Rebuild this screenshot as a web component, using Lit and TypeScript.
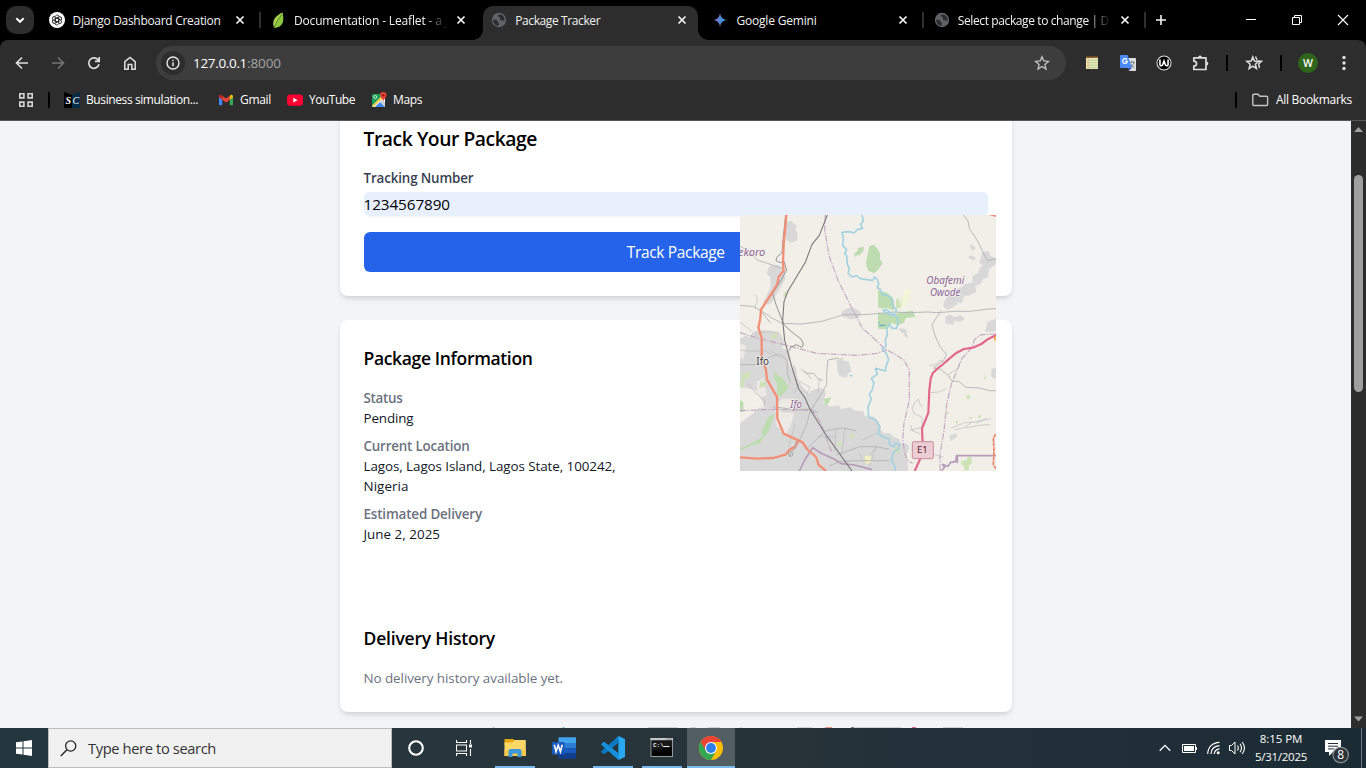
import { LitElement, html, css, svg } from "lit";
import { customElement, property } from "lit/decorators.js";
import { classMap } from "lit/directives/class-map.js";

/** One line of text whose tracking is tuned so the line spans `width` pixels. */
@customElement("fit-text")
class FitText extends LitElement {
  static styles = css`
    :host { display: inline-block; white-space: pre; }
  `;
  @property({ type: Number }) width = 0;
  @property() text = "";
  render() {
    return html`<span>${this.text}</span>`;
  }
  updated() {
    const span = this.renderRoot.querySelector("span") as HTMLElement;
    span.style.letterSpacing = "0px";
    const natural = span.getBoundingClientRect().width;
    if (this.width && natural) {
      span.style.letterSpacing = `${(this.width - natural) / this.text.length}px`;
    }
  }
}

const fit = (text: string, width: number) => html`<fit-text text=${text} width=${width}></fit-text>`;

const globe = html`<svg width="16" height="16" viewBox="0 0 16 16">
  <circle cx="8" cy="8" r="7.2" fill="#5f6368" />
  <path d="M2.2 7.2C3.6 8 5.2 7.4 6 8.2c.9.8.2 1.7 1 2.3.8.5 1.1.6 1 1.6-.1.9-.2 1.2-.9 1.6C4 13.3 1.9 10.600 2.200 7.200zM8.600 2.400c-1.400.2-2.200 1-2 1.900.3.8 1.700.3 2.300 1.100.6.9-.5 1.500.2 2.300.8.9 2.100.1 3 .8.5.4.6.9 1.100 1C14.500 6.200 12.300 2.700 8.600 2.400z" fill="#2b2c2e" />
</svg>`;

const gptIcon = html`<svg width="16" height="16" viewBox="0 0 16 16">
  <circle cx="8" cy="8" r="8" fill="#fff" />
  <g fill="none" stroke="#222" stroke-width=".9">
    ${[0, 60, 120, 180, 240, 300].map(
      (a) => svg`<path transform="rotate(${a} 8 8)" d="M6.200 8.900V5.100C6.200 2.900 9.200 2.300 10.200 4.200M6.200 7 9.300 5.200" />`
    )}
  </g>
</svg>`;

const leafIcon = html`<svg width="16" height="16" viewBox="0 0 16 16">
  <path d="M12.300.5C7 3 2.300 7 3.300 13.200L4 15.500c5 .3 8.500-2.500 9.100-7.300.3-3-.2-5.500-.8-7.700z" fill="#a5d14f" />
  <path d="M12.300.5C9.500 5 6.500 10 4 15.500c5 .3 8.500-2.500 9.100-7.300.3-3-.2-5.500-.8-7.700z" fill="#8dc63f" />
  <path d="M11.800 2.500C8.500 7 6 10.500 4 15.500" stroke="#466b1c" stroke-width=".7" fill="none" />
</svg>`;

const geminiIcon = html`<svg width="16" height="16" viewBox="0 0 16 16">
  <defs><linearGradient id="gm" x1="0" y1="0" x2="1" y2="0">
    <stop offset="0" stop-color="#9a72c8" /><stop offset=".45" stop-color="#5684d8" /><stop offset="1" stop-color="#2fb0ee" />
  </linearGradient></defs>
  <path d="M8 1.300C8.500 5.200 10.600 7.500 14.500 8 10.600 8.500 8.500 10.700 8 14.700 7.500 10.700 5.400 8.500 1.500 8 5.400 7.500 7.500 5.200 8 1.300z" fill="url(#gm)" />
</svg>`;

const tabs = [
  { title: "Django Dashboard Creation", width: 148, icon: gptIcon, sep: true },
  { title: "Documentation - Leaflet - a J", width: 154, icon: leafIcon, fade: true },
  { title: "Package Tracker", width: 85, icon: globe, active: true },
  { title: "Google Gemini", width: 80, icon: geminiIcon, sep: true },
  { title: "Select package to change | D", width: 151, icon: globe, fade: true, sep: true },
];

const closeX = html`<svg width="16" height="16" viewBox="0 0 16 16"><path d="M4.500 4.500l7 7M11.500 4.500l-7 7" stroke="#f4f4f4" stroke-width="1.700" /></svg>`;

@customElement("tab-strip")
class TabStrip extends LitElement {
  static styles = css`
    :host { display: flex; height: 40px; background: #000; color: #f2f2f2; font-size: 12px; align-items: center; }
    svg { display: block; flex: none; }
    .search { width: 28px; height: 28px; margin: 0 6px; border-radius: 10px; background: #2d2d2d; display: grid; place-items: center; }
    .tabs { display: flex; align-self: stretch; padding-top: 6px; margin-left: .6px; }
    .tab { width: 221.300px; display: flex; height: 34px; }
    .body { width: 215px; box-sizing: border-box; display: flex; align-items: center; padding: 0 8px 6px 8px; border-radius: 10px 10px 0 0; position: relative; }
    .active .body { background: #2d2d2d; }
    .active .body::before, .active .body::after { content: ""; position: absolute; bottom: 0; width: 10px; height: 10px; }
    .active .body::before { left: -10px; background: radial-gradient(circle at 0 0, transparent 9.500px, #2d2d2d 10px); }
    .active .body::after { right: -10px; background: radial-gradient(circle at 100% 0, transparent 9.500px, #2d2d2d 10px); }
    .title { width: 154px; margin-left: 8px; overflow: hidden; line-height: 18px; padding-top: 2px; white-space: nowrap; }
    .fade { mask-image: linear-gradient(90deg, #000 130px, transparent 153px); }
    .close { margin-left: 6px; }
    .sep { width: 2px; height: 16px; background: #2f2f2f; margin: 6px 0 0 3px; }
    .plus { margin-left: 8px; }
    .win { margin-left: auto; display: flex; padding-right: 0; }
    .win svg { width: 46px; height: 40px; }
  `;
  render() {
    return html`
      <div class="search"><svg width="12" height="12" viewBox="0 0 12 12"><path d="M2.300 4.200 6 7.800 9.700 4.200" fill="none" stroke="#fff" stroke-width="1.900" /></svg></div>
      <div class="tabs">
        ${tabs.map(
          (t) => html`<div class=${classMap({ tab: true, active: !!t.active })}>
            <div class="body">${t.icon}<div class=${classMap({ title: true, fade: !!t.fade })}>${fit(t.title, t.width)}</div><span class="close">${closeX}</span></div>
            ${t.sep ? html`<div class="sep"></div>` : ""}
          </div>`
        )}
      </div>
      <svg class="plus" width="12" height="12" viewBox="0 0 12 12"><path d="M6 1v10M1 6h10" stroke="#f4f4f4" stroke-width="1.600" /></svg>
      <div class="win">
        <svg viewBox="0 0 46 40"><path d="M18 19.500h10" stroke="#fff" /></svg>
        <svg viewBox="0 0 46 40"><path d="M18.500 17.500h7v7h-7zM20.500 17.500v-2h7v7h-2" stroke="#fff" fill="none" /></svg>
        <svg viewBox="0 0 46 40"><path d="M18 15l10 10M28 15 18 25" stroke="#fff" stroke-width="1.100" /></svg>
      </div>`;
  }
}

@customElement("browser-bar")
class BrowserBar extends LitElement {
  static styles = css`
    :host { display: block; background: #000; color: #fff; }
    .wrap { background: #2d2d2d; border-radius: 8px 8px 0 0; border-bottom: 1px solid #55565a; height: 80px; }
    svg { display: block; flex: none; }
    .row { display: flex; align-items: center; height: 46px; padding: 0 4px; }
    .ic { width: 36px; height: 34px; display: grid; place-items: center; flex: none; }
    .omni { flex: 1; margin: 0 8px; height: 34px; border-radius: 17px; background: #3d3d3d; display: flex; align-items: center; font-size: 13.500px; }
    .info { width: 24px; height: 24px; border-radius: 50%; background: #2d2d2d; display: grid; place-items: center; margin: 0 8px 0 5px; }
    .dim { color: #a3a3a3; }
    .star { margin-left: auto; margin-right: 16px; }
    .sep { width: 2px; height: 16px; background: #000; margin: 0 8px; flex: none; }
    .avatar { width: 20px; height: 20px; border-radius: 50%; background: #2f661b; font-size: 10.500px; font-weight: 600; display: grid; place-items: center; line-height: 20px; }
    .marks { display: flex; align-items: center; height: 28px; font-size: 12px; padding: 0 14px 0 18px; line-height: 18px; }
    .marks .sep { margin: 0 14px; }
    .mark { display: flex; gap: 6px; align-items: center; margin-right: 16px; }
    .first { margin-right: 20px; }
    .right { margin-left: auto; display: flex; align-items: center; }
    .right fit-text { margin-left: 7px; }
  `;
  render() {
    return html`<div class="wrap">
      <div class="row">
        <div class="ic"><svg width="16" height="16" viewBox="0 0 16 16"><path d="M14 8H2.800M8 2.500 2.500 8 8 13.500" fill="none" stroke="#dedede" stroke-width="1.600" /></svg></div>
        <div class="ic"><svg width="16" height="16" viewBox="0 0 16 16"><path d="M2 8h11.200M8 2.500 13.500 8 8 13.500" fill="none" stroke="#747474" stroke-width="1.600" /></svg></div>
        <div class="ic"><svg width="16" height="16" viewBox="0 0 16 16"><path d="M13 9.300A5.200 5.200 0 1 1 12.300 5.200M13.200 2v4.300H8.900" fill="none" stroke="#dedede" stroke-width="1.700" /></svg></div>
        <div class="ic"><svg width="16" height="16" viewBox="0 0 16 16"><path d="M2.800 14.200V6.700L8 2.400l5.200 4.300v7.500H9.800V9.500H6.200v4.700z" fill="none" stroke="#dedede" stroke-width="1.500" /></svg></div>
        <div class="omni">
          <div class="info"><svg width="14" height="14" viewBox="0 0 14 14"><circle cx="7" cy="7" r="6" fill="none" stroke="#e6e6e6" stroke-width="1.400" /><path d="M7 6.200v4M7 3.700v1.400" stroke="#e6e6e6" stroke-width="1.500" /></svg></div>
          ${fit("127.0.0.1", 54)}<span class="dim">${fit(":8000", 34)}</span>
          <svg class="star" width="16" height="16" viewBox="0 0 16 16"><path d="M8 1.700l1.800 4.300 4.700.4-3.600 3 1.100 4.600L8 11.500l-4 2.500 1.100-4.600-3.600-3 4.700-.4z" fill="none" stroke="#c4c4c4" stroke-width="1.300" /></svg>
        </div>
        <div class="ic"><svg width="12" height="14" viewBox="0 0 12 14"><path d="M0 1h12v12H0z" fill="#ede9b5" /><path d="M0 1.200h12" stroke="#8b5a32" stroke-width="1.600" /><path d="M2.500 4.200H12M2.500 6.700H12M2.500 9.200H12M2.500 11.500H12" stroke="#a5c99a" stroke-width=".8" /><path d="M2 2v11" stroke="#df9b70" stroke-width=".8" /></svg></div>
        <div class="ic"><svg width="16" height="16" viewBox="0 0 16 16"><path d="M7 3h8.200q.8 0 .8.800v11.400q0 .8-.8.800H9z" fill="#dedede" /><path d="M8.500 7.200H15M11.700 6v1.200M14 7.200c-.5 2.500-2 4-4.500 5.300M10.300 8.500c.8 1.900 2 3.200 4 4" stroke="#6e8388" stroke-width="1" fill="none" /><path d="M8 12.500h4L9 16z" fill="#3949ab" /><path d="M1 0h6.500L12 13H1q-1 0-1-1V1q0-1 1-1z" fill="#4c8bf5" /><path d="M7 4.700A2.400 2.400 0 1 0 7.400 6.400H5" fill="none" stroke="#fff" stroke-width="1.200" /></svg></div>
        <div class="ic"><svg width="16" height="16" viewBox="0 0 15 15"><circle cx="7.500" cy="7.500" r="6.600" fill="#000" stroke="#dedede" stroke-width="1" /><path d="M3.700 4.300V9.200Q4.600 10.700 6 9.600L7.500 5.600 9 9.600Q10.400 10.700 11.300 9.200V4.300" fill="none" stroke="#fff" stroke-width="1.500" /></svg></div>
        <div class="ic"><svg width="18" height="18" viewBox="0 0 18 18"><path d="M2.800 3.800h12.200V15.500H2.800v-3.400c3.700-.3 3.700-4.600 0-4.900z" fill="none" stroke="#dedede" stroke-width="1.700" stroke-linejoin="round" /><path d="M7.100 3.500a1.900 1.900 0 0 1 3.800 0zM15.400 7.600a1.900 1.900 0 0 1 0 3.900z" fill="#dedede" /></svg></div>
        <div class="sep"></div>
        <div class="ic"><svg width="18" height="16" viewBox="0 0 18 16"><path d="M7.800 2l1.600 4.100 4.300.3-3.300 2.800 1.100 4.300-3.700-2.400-3.700 2.400 1.100-4.300L1.900 6.400l4.300-.3z" fill="none" stroke="#dedede" stroke-width="1.500" /><path d="M10.500 1.500 12 5M13 6l3.600.3-3 2.700.9 4" fill="none" stroke="#dedede" stroke-width="1.400" /></svg></div>
        <div class="sep"></div>
        <div class="ic"><div class="avatar">W</div></div>
        <div class="ic"><svg width="4" height="16" viewBox="0 0 4 16"><g fill="#dedede"><circle cx="2" cy="2.500" r="1.700" /><circle cx="2" cy="8" r="1.700" /><circle cx="2" cy="13.500" r="1.700" /></g></svg></div>
      </div>
      <div class="marks">
        <svg width="16" height="16" viewBox="0 0 16 16"><path d="M1.800 1.800h4.100v4.100H1.800zM10.100 1.800h4.100v4.100h-4.100zM1.800 10.100h4.100v4.100H1.800zM10.100 10.100h4.100v4.100h-4.100z" fill="none" stroke="#d4d4d4" stroke-width="1.600" /></svg>
        <div class="sep"></div>
        <div class="mark first"><svg width="16" height="16" viewBox="0 0 16 16"><path d="M0 0l8 3v13H0z" fill="#000" /><path d="M8 3l8-3v16H8z" fill="#062c47" /><text x="1.600" y="12.300" font-family="Liberation Serif, serif" font-size="10" font-style="italic" font-weight="700" fill="#fff">S</text><text x="8.500" y="12.300" font-family="Liberation Serif, serif" font-size="10" font-style="italic" fill="#fff">C</text></svg>${fit("Business simulation...", 112)}</div>
        <div class="mark"><svg width="16" height="16" viewBox="0 0 16 16"><path d="M1 4v8.500q0 .8.800.8h2.400V6z" fill="#4285f4" /><path d="M15 4v8.500q0 .8-.8.800h-2.400V6z" fill="#34a853" /><path d="M4.200 3.700 8 6.500l3.800-2.800v4L8 10.500 4.200 7.700z" fill="#ea4335" /><path d="M1 4.300q.3-2.300 2.300-1.300l.9.700v4L1 5.300z" fill="#c5221f" /><path d="M15 4.300q-.3-2.300-2.300-1.300l-.9.700v4L15 5.300z" fill="#fbbc04" /></svg>${fit("Gmail", 31)}</div>
        <div class="mark"><svg width="16" height="16" viewBox="0 0 16 16"><rect x="0" y="2.500" width="16" height="11.300" rx="3" fill="#ff0033" /><path d="M6.300 5.700v4.900l4.300-2.450z" fill="#fff" /></svg>${fit("YouTube", 46)}</div>
        <div class="mark"><svg width="16" height="16" viewBox="0 0 16 16"><rect x="1" y="2" width="13" height="13" rx="1" fill="#1e9e58" /><path d="M1 14 12 3h2v11.500q0 .5-.5.500H2z" fill="#f1f3f4" /><path d="M4 15l5-5 5 5z" fill="#4285f4" /><path d="M11 8l3 3v3.500L9.300 9.700z" fill="#c8cdd0" /><path d="M1 14 10 5l1.300 1.700L2.500 15z" fill="#ffcd40" /><circle cx="4.200" cy="5" r="1.500" fill="none" stroke="#e8f5e9" stroke-width=".8" /><path d="M12.300 0a3.200 3.200 0 0 0-3.200 3.200c0 2.300 2.600 3.300 3.200 6.300.6-3 3.200-4 3.200-6.300A3.200 3.200 0 0 0 12.300 0z" fill="#ea4335" /><circle cx="12.300" cy="3.200" r="1.200" fill="#8c1d13" /></svg>${fit("Maps", 29)}</div>
        <div class="right">
          <div class="sep"></div>
          <svg width="18" height="14" viewBox="0 0 18 14"><path d="M1.800 2.500q0-1.200 1.200-1.200h4l1.800 2h6.800q1 0 1 1v7.200q0 1-1 1H2.800q-1 0-1-1z" fill="none" stroke="#c4c4c4" stroke-width="1.400" /></svg>
          ${fit("All Bookmarks", 76)}
        </div>
      </div>
    </div>`;
  }
}

@customElement("map-tile")
class MapTile extends LitElement {
  static styles = css`
    :host { display: block; width: 256px; height: 256px; }
    svg { display: block; }
    .town { fill: #d8d8d8; }
    .wood { fill: #bddcb0; }
    .field { fill: #cde3b5; }
    .minor { fill: none; stroke: #b5b5b5; stroke-width: 2.800; stroke-linejoin: round; }
    .thin { fill: none; stroke: #b9b9bb; stroke-width: 2; stroke-linejoin: round; }
    .rail { fill: none; stroke: #777; stroke-width: 3.200; stroke-linejoin: round; }
    .loop { fill: none; stroke: #858585; stroke-width: 2.600; stroke-linejoin: round; }
    .river { fill: none; stroke: #a3d2e0; stroke-width: 5; stroke-linejoin: round; stroke-linecap: round; }
    .trunk { fill: none; stroke: #f28f76; stroke-width: 7; stroke-linejoin: round; }
    .motor { fill: none; stroke: #e4668a; stroke-width: 6.500; stroke-linejoin: round; }
    .bound { fill: none; stroke: #c3a8c2; stroke-width: 3.500; stroke-dasharray: 19 4 4 4; stroke-linejoin: round; }
    .state { fill: none; stroke: #b79bb9; stroke-width: 5; }
    .place { font-family: "Noto Sans", sans-serif; font-style: italic; fill: #8d6596; stroke: #f4f0ec; stroke-width: 4; paint-order: stroke; font-size: 30px; }
    .city { font-family: "Noto Sans", sans-serif; fill: #333; stroke: #f0eeee; stroke-width: 5; paint-order: stroke; font-size: 31px; }
    .ref { font-family: "Noto Sans", sans-serif; fill: #5f1730; font-size: 28px; }
  `;
  render() {
    return html`<svg width="256" height="256" viewBox="12 15 768 768">
      <rect x="12" y="15" width="768" height="768" fill="#f2efe9" />
      <g class="town">
        <path d="M150 36l18-4 6 10 10 4-6 12 8 16-4 18-18 6-12-8-6-24z" />
        <path d="M100 168l24-4 22 14 2 28-14 26-28 46-16 8-8-10 22-44-2-30-10-12z" />
        <path d="M12 386l20-10 8 8 12-20 32-4 30 6 20 6 10 22-6 20 20 10 10 30 12 20 6 40 22 26 10 10 10-10 30-6 12 10-8 36 24 10 22-4 8 12 26-6 16 10 24 2 4 14 26 2 16 14 2 20 16 18 10-4 20 14 14 6 6 14 14-4 10 14-8 20 8 82H12V640l40-30 30-30-24-40-46-10z" />
        <path d="M316 306l20-12 20 0 20 16-8 14-24 4-24-8zM302 450l18-8 4 10 14 2 8 30-10 6-4 14-22-6-6-20zM490 354l20 4 6 26-8-4-6-10-10-6z" />
        <path d="M740 126l16-4 8 16 16 8v16l-22 18-2 22-14 4-8 16-16 6 2 18-24 12-10-2-10 24-16-4-18 10-12-18 18-16 10 4 4-20 16-6 10-8 20-4 2-20 16-8 4-14 10-10-10-8z" />
        <path d="M622 282l10-20 14-8 14 8 4 20-14 10-14 8-12-8zM628 320l14-6 14 8 20-6 10 12-14 8-16-4-4 12-24-4zM754 336l26-10v38l-32 2zM766 478l14-6v36l-14-8zM640 676l20-6 4 10-20 14zM700 108l8-6 10 12-8 10zM696 142l10-6 14 8-8 8z" />
      </g>
      <g fill="#f2efe9">
        <path d="M62 516l20-12 10 50-16 10-12-14zM136 566l36 0 12 24-36 10-22-6zM128 606l46 4-12 44-16 4-16-18zM130 570l12 90-20-10-4-50zM12 572l64 4 14 16-78 8zM128 664l30-10-6 18zM228 490l24 4-8 10-20-6zM12 400l18 8-8 40-10-6zM160 440l14 20-8 20-10-20z" opacity=".8" />
      </g>
      <g class="wood">
        <path d="M400 108l14-4 12 14 6 14 0 14 8 14-14 20-12 10-18-8-6-20 4-24zM354 132l10-8 2-10 18-4-2 14-12 12-8 0-4 6z" />
        <path d="M426 240l26 8 18 14 6 26-4 14-18-8-14 2-14-4zM426 308l46 4 0 10 12-14 46-6 8 18-28 4-6 14-18 8-18-8-14 20-28-2z" />
        <path d="M116 480l8 14 14 8 20 30-22 26-14-4 2-30-10-20zM96 622l22-12-20 54-20 24-4 12-30 8-32 14v-6l34-16 30-16 4-26zM264 566l22-4-8 16-10 12zM12 570l10 6v30l-10 0z" />
      </g>
      <g class="field">
        <path d="M480 268l10-2 2 28-12 0zM500 262l-4 30-6 0zM20 492l22-8-2 20-14 4-6 28-8-6zM74 512l12 6 2 12-20 4z" />
        <path d="M104 374l20-6 2 14-18 4zM144 248l10-4-4 18h-8zM660 632h6v8h-6zM692 556h10v10h-10zM744 500h6v6h-6zM700 622h8v5h-8zM726 616h8v8h-8zM630 606h8v6h-8zM676 752l16-2 4-10 10 2 2 18-10 6 2 14-14 2-2-14-10-6zM476 712l16 0-6 18h-10zM306 694l8-4 4 16-10 4zM384 740l22-6-4 20-16 6zM342 676l6-6 8 8-10 8z" />
      </g>
      <path d="M504 240l22-4-6 30-12 26-14 4 6-28z" fill="#f3f5d9" />
      <path d="M386 738l18-2 4 20-18 6z" fill="#f4f1c4" />

      <g class="minor">
        <path d="M12 108l30 18 22 24 30 10 24 8 30 10" />
        <path d="M12 286l40 4 26 14 30 20 30 16 60 2 60-8 40-12 24-8h60l94-8 40 2 60-2 30 2 50-4 44 0 50-6 46-4 40-2" />
        <path d="M682 15l14 18 4 22 26 40 28 58 26-8" />
        <path d="M616 302l-14 20-14 22 8 30 16 36 20 24-10 18-30 22 22 4 24 20 10 16 20 0 22 18 40 2 30 8 56 0" />
        <path d="M104 340l-22-28-10-10M12 464h50l46-26 26-4 20 18 0 38 10 28M196 478l14 12 22 0 18 20 10 0M308 444l-32 6-4 40 0 34-20 34-30 46-10 40-26 56" />
        <path d="M110 590l60 8 50 0 26 10M216 712l54-50 50-8 40 8M300 736l70-26 50 0 40 8M280 768l30-14 60-2 90 0" />
      </g>
      <g class="thin">
        <path d="M560 590l-8-6-4-16-8 4-12 22 6 16 24 12 0 30-34 8 30 12M530 662l-6-16M580 468l22-6 8-10 14 2M584 548l24-2 22-10M636 494l30-18 6-20M646 654l40-16 30-2 30-6 20-4M656 660l30-8 20-14M688 654l40-8 34-2M722 640l30-16M58 296l0-14 6-6-2-16-6-8M12 336l20 16 16 12M12 420l40 4 36-2 16 12M56 374l40-10 34 4M36 520l20 26 30 24 0 20M100 420l34 22M206 482l20 26M250 504l-4 46M180 508l42 24-10 20M300 660l-4 64M326 655l-8 76M250 680l50 0M380 690l40-20M400 740l20-30M370 730l10 20M190 520l-16 30M178 640l-20 70M400 770l20-60M622 742l-24-8-20 0" />
      </g>

      <g class="bound">
        <path d="M268 15l-2 45 14 80 26 70 34 70 40 76 26 22 40 38 30 16 28 18 16 30 0 90-16 70-4 50 6 40 10 24 14 6" />
        <path d="M12 368l60 18 80 20 90 24 120 6 60-6 30-10" />
        <path d="M12 602l110-4 110 4M226 596l28 42 18 50 14 36M780 372l-44 2-20 14-8 24-30 34-32 76-14 60-8 80-12 70 0 53" />
      </g>
      <path class="state" d="M190 783l18-36 22-34 24 16 40 18 22 14 40 4 52 14M616 783l10-12-8-8 18 6 8-12 14-2 4-18h120M664 738l0 22" />

      <path class="river" d="M378 15l4 18-8 10 6 12-16 4-10 10-14-4-22 2 4 20-2 20 12 12-6 12 6 6 2 26 6 12-4 14 12 12 14-4 10 8 20 4 18 2 6-10 8 8 4 14-4 10 8 4 6 16 18 4 14 14 2 20 10 8-8 18-22-6-10-10 10-2 18 14 14 10 2 18-4 14-14 0-8-12-8 12 2 20 -6 14 2 20-12 8 12 12 8 20-8 20-2 14-30-8 6 18-18 12 8 14-6 22-8 12 6 14-10 24 2 30 20 8 14 20-6 22 20 12 14 4 0 16 14 8 4-12 12 4-2 14-16 10-6 24 12 22-4 28" />
      <path d="M429 336v4M430 346h18" stroke="#4f9ad0" stroke-width="3" />
      <path d="M340 496l10 2" stroke="#a3d2e0" stroke-width="4" />

      <path class="loop" d="M149 15l-8 75-3 38-16 14-2 10 12 6 12-4 8 26-20 36-22 34 10 34 14 36 10 24 26 24 26 20 6 14-4 10-18-8-16 8-4 10" />
      <path class="rail" d="M274 15L250 76 228 103 208 157 156 243 144 275 140 331 146 391 166 466 188 537 206 562 222 598 248 640 274 680 348 783" />
      <path class="trunk" d="M151 15L143 105 141 160 143 182 128 200 124 222 110 246 75 299 73 325 67 353 77 383 77 440 90 480 93 508 105 530 123 561 124 625 143 671 182 689 200 697 213 717 240 741 248 765 270 783" />
      <path class="trunk" d="M12 742l50 4 50-2 36-10 14-16 16-8 8-18" />
      <path d="M160 740l6-16 12-8 2-20" fill="none" stroke="#aaa" stroke-width="3" />
      <circle cx="164" cy="732" r="7" fill="none" stroke="#aaa" stroke-width="3" />
      <path class="motor" d="M780 376L758 386 736 402 714 412 684 417 662 428 640 446 622 462 604 476 590 490 584 506 580 540 577 608 566 636 558 656 560 700 560 730 536 783" />
      <path d="M780 672l-8 12 2 40-2 40 8 12" fill="none" stroke="#e98467" stroke-width="5" stroke-dasharray="12 2" />
      <path d="M758 15h22v6z" fill="#f28f76" /><rect x="774" y="380" width="6" height="12" fill="#f8b25b" />

      <text class="place" x="-3" y="139" textLength="91" lengthAdjust="spacingAndGlyphs">lekoro</text>
      <text class="place" x="571" y="223" textLength="114" lengthAdjust="spacingAndGlyphs">Obafemi</text>
      <text class="place" x="582" y="259" textLength="91" lengthAdjust="spacingAndGlyphs">Owode</text>
      <text class="place" x="163" y="595" textLength="35" lengthAdjust="spacingAndGlyphs">Ifo</text>
      <text class="city" x="61" y="464" textLength="38" lengthAdjust="spacingAndGlyphs">Ifo</text>
      <rect x="529" y="695" width="63" height="51" rx="4" fill="#eccdd3" stroke="#c98b9b" stroke-width="3" />
      <text class="ref" x="543" y="730" textLength="32" lengthAdjust="spacingAndGlyphs">E1</text>
    </svg>`;
  }
}

@customElement("tracker-page")
class TrackerPage extends LitElement {
  static styles = css`
    :host { display: flex; height: 607px; background: #f3f4f6; overflow: hidden; }
    .view { flex: 1; overflow: hidden; position: relative; }
    .col { width: 672px; margin: -21px 0 0 340px; display: flex; flex-direction: column; gap: 24px; }
    .card { background: #fff; border-radius: 8px; box-shadow: 0 4px 6px -1px rgba(0,0,0,.1), 0 2px 4px -2px rgba(0,0,0,.1); padding: 24px; box-sizing: border-box; color: #000; }
    .one { height: 196px; }
    .two { height: 392px; }
    h2, h3, p { margin: 0; }
    h2 { font-size: 19.300px; line-height: 28px; font-weight: 600; padding-top: 1px; margin-bottom: 15px; }
    h3 { font-size: 17.500px; line-height: 28px; font-weight: 600; margin-bottom: 16px; }
    fit-text { vertical-align: top; margin-left: -.5px; }
    .label { font-size: 13.400px; line-height: 20px; font-weight: 600; color: #374151; height: 20px; margin-bottom: 4px; }
    .input { height: 24px; line-height: 24px; font-size: 15.300px; background: #e8f0fe; border-radius: 6px; box-shadow: 0 1px 2px rgba(0,0,0,.05); margin-bottom: 16px; }
    .button { height: 40px; line-height: 41px; font-size: 15.500px; background: #2563eb; color: #fff; border-radius: 6px; text-align: center; }
    .info { height: 236px; display: flex; flex-direction: column; gap: 8px; font-size: 13.400px; line-height: 20px; color: #111827; }
    .info p { height: 20px; }
    .info .k { font-weight: 600; color: #6b7280; }
    .none { font-size: 13.400px; line-height: 20px; color: #6b7280; }
    map-tile { position: absolute; left: 740px; top: 94px; }
    .strip { position: absolute; left: 480px; top: 606px; display: block; }
    .bar { width: 15px; background: #2c2c2c; display: flex; flex-direction: column; align-items: center; }
    .thumb { width: 9px; height: 217px; border-radius: 4.500px; background: #9f9f9f; margin-top: 39px; }
    .bar svg { display: block; flex: none; }
    .down { margin-top: auto; }
  `;
  render() {
    return html`
      <div class="view">
        <div class="col">
          <section class="card one">
            <h2>${fit("Track Your Package", 173.500)}</h2>
            <p class="label">${fit("Tracking Number", 110)}</p>
            <div class="input">${fit("1234567890", 86.500)}</div>
            <div class="button">${fit("Track Package", 98)}</div>
          </section>
          <section class="card two">
            <h3>${fit("Package Information", 169)}</h3>
            <div class="info">
              <div><p class="k">${fit("Status", 39)}</p><p>${fit("Pending", 50)}</p></div>
              <div><p class="k">${fit("Current Location", 106)}</p><p>${fit("Lagos, Lagos Island, Lagos State, 100242,", 252)}</p><p>${fit("Nigeria", 45)}</p></div>
              <div><p class="k">${fit("Estimated Delivery", 118.500)}</p><p>${fit("June 2, 2025", 76.500)}</p></div>
            </div>
            <h3>${fit("Delivery History", 131.500)}</h3>
            <p class="none">${fit("No delivery history available yet.", 199.500)}</p>
          </section>
        </div>
        <map-tile></map-tile>
        <svg class="strip" width="520" height="1" viewBox="0 0 520 1">
          <path d="M12 .5h3M168 .5h30M210 .5h6M228 .5h12M260 .5h2M317 .5h15M371 .5h50M463 .5h20" stroke="#d3d3d3" />
          <path d="M82 .5h3" stroke="#a3d2e0" /><path d="M345 .5h7" stroke="#e49a86" /><path d="M432 .5h4" stroke="#e4668a" /><path d="M371 .5h3" stroke="#777" />
        </svg>
      </div>
      <div class="bar">
        <svg width="15" height="15" viewBox="0 0 15 15"><path d="M3 11 7.500 6 12 11z" fill="#9f9f9f" /></svg>
        <div class="thumb"></div>
        <svg class="down" width="15" height="15" viewBox="0 0 15 15"><path d="M3 3.500 7.500 8.500 12 3.500z" fill="#9f9f9f" /></svg>
      </div>`;
  }
}

const explorer = html`<svg width="24" height="24" viewBox="0 0 24 24"><path d="M1.500 3h9l1.500 2v4H1.500z" fill="#e5a50f" /><path d="M1.500 6.500h8l2-2.500H22q.8 0 .8.800V20H1.500z" fill="#ffd767" /><path d="M1.500 14v6h21.300v-6z" fill="#f9c94d" /><path d="M5.500 21v-6q0-2 2-2h9q2 0 2 2v6h-4v-3.500h-5V21z" fill="#3d97d8" /></svg>`;
const word = html`<svg width="24" height="24" viewBox="0 0 24 24"><path d="M7 1.300h16.500q.5 0 .5.500V7H6.500V1.800q0-.5.500-.5z" fill="#41a5ee" /><path d="M6.500 7H24v5.300H6.500z" fill="#2b7cd3" /><path d="M6.500 12.300H24v5.200H6.500z" fill="#185abd" /><path d="M6.500 17.500H24v4.800q0 .5-.5.500H7q-.5 0-.5-.5z" fill="#103f91" /><rect x="0" y="6" width="12.500" height="12.500" rx="1" fill="#185abd" /><path d="M2.300 8.700 4 15.700 6.200 9.200 8.400 15.700 10.200 8.700" fill="none" stroke="#fff" stroke-width="1.600" /></svg>`;
const code = html`<svg width="24" height="24" viewBox="0 0 24 24"><path d="M17.500 0 24 3v18l-6.500 3z" fill="#29a9f2" /><path d="M17.500 0 17.900 6.600 3.500 18 2 17.700.3 16 .3 15.300z" fill="#0d79c4" /><path d="M17.500 24l.4-6.600L3.500 6 2 6.300.3 8v.7z" fill="#1590dd" /><path d="M17.500 0v24l-1.500-1.300L17.900 17V7L16 1.300z" fill="#1d9bea" /></svg>`;
const cmd = html`<svg width="24" height="24" viewBox="0 0 24 24"><rect x="1" y="2.500" width="21.500" height="18" fill="#050505" stroke="#999" /><path d="M.5 2h22.500v2.300H.5z" fill="#c5c8cb" /><path d="M16.500 3.200h1M18.500 3.200h1M20.500 3.200h1" stroke="#555" /><path d="M1.500 5H22v6L1.500 15z" fill="#2e2e2e" opacity=".5" /><text x="3" y="10.800" font-family="Liberation Mono, monospace" font-size="6" font-weight="700" fill="#eee">C:\\</text><path d="M13.500 10.500h6" stroke="#eee" /></svg>`;
const chrome = html`<svg width="24" height="24" viewBox="0 0 24 24"><circle cx="12" cy="12" r="12" fill="#fbbc05" /><path d="M1.600 6A12 12 0 0 0 12 24l5.200-9L6.800 12z" fill="#34a853" /><path d="M1.600 6A12 12 0 0 1 22.400 6H12L6.800 15z" fill="#ea4335" /><path d="M1.600 6 6.800 15 12 18 8 21 2 16z" fill="#34a853" /><circle cx="12" cy="12" r="6" fill="#fff" /><circle cx="12" cy="12" r="4.900" fill="#2f7de9" /></svg>`;

@customElement("task-bar")
class TaskBar extends LitElement {
  static styles = css`
    :host { display: flex; height: 40px; background: linear-gradient(90deg, #23353d 0, #27363c 480px, #273239 800px, #22303a 1000px, #1b2b33 1366px); color: #fff; }
    svg { display: block; flex: none; }
    .start, .app { width: 48px; height: 40px; display: grid; place-items: center; flex: none; box-sizing: border-box; }
    .search { width: 344px; box-sizing: border-box; background: #f1f1f1; border: 1px solid #bcbcbc; display: flex; align-items: center; padding-left: 11px; color: #333; font-size: 14.700px; }
    .search fit-text { margin-left: 11px; }
    .apps { display: flex; }
    .pinned { display: flex; gap: 1px; margin-left: 3px; }
    .run { background: linear-gradient(#7ab9ed, #7ab9ed) center bottom / 40px 2px no-repeat; }
    .on { background: linear-gradient(#7ab9ed, #7ab9ed) center bottom / 48px 2px no-repeat, #535e62; }
    .tray { margin-left: auto; display: flex; align-items: center; }
    .gap { margin-left: 8px; }
    .clock { width: 64px; margin-left: 3px; text-align: center; font-size: 11.500px; line-height: 18px; }
    .clock div { height: 18px; }
    .note { margin-left: 6px; margin-right: 10px; }
    .edge { width: 1px; height: 40px; background: #6b777c; margin-right: 4px; }
  `;
  render() {
    return html`
      <div class="start"><svg width="16" height="16" viewBox="0 0 16 16"><path d="M0 2.300 6.500 1.400V7.500H0zM7.500 1.200 16 0v7.500H7.500zM0 8.500h6.500v6.100L0 13.700zM7.500 8.500H16V16l-8.500-1.200z" fill="#fff" /></svg></div>
      <div class="search"><svg width="17" height="17" viewBox="0 0 17 17"><circle cx="10.700" cy="6" r="5.100" fill="none" stroke="#222" stroke-width="1.300" /><path d="M7 9.800.8 16" stroke="#222" stroke-width="1.400" /></svg>${fit("Type here to search", 128)}</div>
      <div class="apps">
        <div class="app"><svg width="16" height="16" viewBox="0 0 16 16"><circle cx="8" cy="8" r="6.800" fill="none" stroke="#fff" stroke-width="2.100" /></svg></div>
        <div class="app"><svg width="16" height="16" viewBox="0 0 16 16"><path d="M.5 0v2.500h10V0M.5 16v-2.500h10V16M.5 5h10v6h-10zM14.500 0v4M14.500 9v7" fill="none" stroke="#fff" stroke-width="1.100" /><path d="M13 4.500h3v3h-3z" fill="#fff" /></svg></div>
      </div>
      <div class="pinned">
        <div class="app run">${explorer}</div><div class="app">${word}</div><div class="app run">${code}</div><div class="app run">${cmd}</div><div class="app on">${chrome}</div>
      </div>
      <div class="tray">
        <svg width="12" height="8" viewBox="0 0 12 8"><path d="M.7 6.800 6 1.400l5.300 5.400" fill="none" stroke="#fff" stroke-width="1.300" /></svg>
        <svg class="gap" width="20" height="16" viewBox="0 0 20 16"><path d="M3.500 4.500h13v8h-13z" fill="none" stroke="#fff" /><path d="M5 6h10v5H5zM16.500 7H18v3h-1.500z" fill="#fff" /></svg>
        <svg class="gap" width="13" height="14" viewBox="0 0 13 14"><g fill="none" stroke="#fff" stroke-width="1.200"><path d="M.7 13C.9 6 5.500 1.600 12.500 1.300" /><path d="M4 13c.3-4.800 3.500-8 8.500-8.300M7.200 13c.3-3 2-4.800 5.300-5.200" /></g><circle cx="11.200" cy="11.800" r="1.500" fill="#fff" /></svg>
        <svg class="gap" width="18" height="16" viewBox="0 0 18 16"><path d="M1.500 5.500h2L7 2v12L3.500 10.500h-2z" fill="none" stroke="#fff" /><path d="M9.500 5.500q1.600 2.500 0 5M12 3.700q3 4.300 0 8.600M14.200 2q4.500 6 0 12" fill="none" stroke="#fff" stroke-width="1.100" /></svg>
        <div class="clock"><div>${fit("8:15 PM", 42.500)}</div><div>${fit("5/31/2025", 52)}</div></div>
        <svg class="note" width="32" height="34" viewBox="0 0 32 34"><path d="M6 9h16v12h-8l-4 4v-4H6z" fill="#fff" /><path d="M9 12.500h10M9 15.200h10M9 17.900h6" stroke="#22303a" stroke-width="1" /><circle cx="21.700" cy="24" r="7.700" fill="#2b3236" stroke="#858b8e" stroke-width="1.300" /><text x="21.700" y="28.200" text-anchor="middle" font-size="12" fill="#fff">8</text></svg>
        <div class="edge"></div>
      </div>`;
  }
}

@customElement("app-root")
class AppRoot extends LitElement {
  static styles = css`
    :host { display: flex; flex-direction: column; width: 1366px; height: 768px; overflow: hidden; font-family: "Open Sans", "Noto Sans", sans-serif; }
    tab-strip, browser-bar, tracker-page, task-bar { flex: none; }
  `;
  render() {
    return html`<tab-strip></tab-strip><browser-bar></browser-bar><tracker-page></tracker-page><task-bar></task-bar>`;
  }
}
